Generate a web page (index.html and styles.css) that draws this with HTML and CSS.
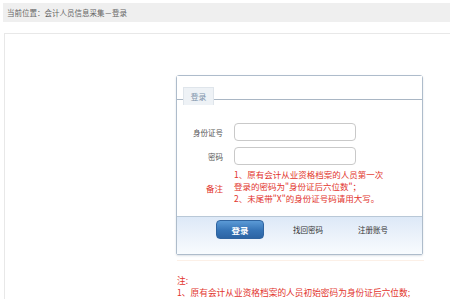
FILE: index.html
```html
<!DOCTYPE html>
<html lang="zh-CN">
<head>
  <meta charset="UTF-8" />
  <title>会计人员信息采集－登录</title>
  <link rel="stylesheet" href="styles.css">
</head>
<body>

<div class="crumb">当前位置：会计人员信息采集－登录</div>

<div class="content">
  <div class="panel">
    <div class="tabs">
      <span class="tab">登录</span>
    </div>
    <div class="form">
      <label class="label">身份证号</label>
      <input type="text" class="field" />
      <label class="label">密码</label>
      <input type="password" class="field" />
      <span class="label red">备注</span>
      <div class="tip">
        1、原有会计从业资格档案的人员第一次<br>
        登录的密码为"身份证后六位数"；<br>
        2、未尾带"X"的身份证号码请用大写。
      </div>
    </div>
    <div class="footer">
      <button class="btn">登录</button>
      <a class="link first">找回密码</a>
      <a class="link">注册账号</a>
    </div>
  </div>

  <div class="notes">
    <p>注:</p>
    <p>1、原有会计从业资格档案的人员初始密码为身份证后六位数;</p>
  </div>
</div>

</body>
</html>
```

FILE: styles.css
```css
* { margin: 0; padding: 0; box-sizing: border-box; font-family: "Noto Sans CJK SC", "Noto Sans", sans-serif; }
html, body { height: 100%; overflow: hidden; background: #fff; }

.crumb {
  margin: 3px 0 0 3px;
  height: 19px;
  line-height: 19px;
  padding-left: 4px;
  background: #efefef;
  color: #666;
  font-size: 7.5px;
}

.content {
  margin: 11px 0 0 4px;
  border: 1px solid #e8e8e8;
  border-right: none;
  border-bottom: none;
  height: 266px;
  overflow: hidden;
  padding: 41px 0 0 171px;
}

.panel {
  width: 247px;
  border: 1px solid #aebccb;
  border-radius: 3px 3px 2px 2px;
  box-shadow: 0 1px 2px rgba(120,140,160,0.25);
}

.tabs {
  height: 24px;
  padding: 5px 0 0 6px;
  border-bottom: 1px solid #a9b6c4;
  background: #fff;
}
.tab {
  display: inline-block;
  width: 31px;
  height: 18px;
  line-height: 17px;
  text-align: center;
  background: #eef2f6;
  border: 1px solid #dfe5eb;
  border-bottom: none;
  color: #7d93ab;
  font-size: 7.8px;
}

.form {
  display: grid;
  grid-template-columns: 46px 122px;
  column-gap: 11px;
  row-gap: 6px;
  align-items: center;
  padding: 23px 0 12px 0;
}
.label {
  text-align: right;
  color: #555;
  font-size: 7.5px;
}
.red { color: #e2342c; font-size: 8.5px; }
.field {
  height: 18px;
  border: 1px solid #c9c9c9;
  border-radius: 4px;
  background: #fff;
}
.tip {
  grid-column: 2 / 3;
  width: 170px;
  margin-top: -3px;
  color: #e2342c;
  font-size: 8.5px;
  line-height: 12px;
  white-space: nowrap;
}

.footer {
  display: flex;
  align-items: flex-start;
  height: 38px;
  padding: 3px 0 0 39px;
  border-top: 1px solid #b9c8d7;
  background: linear-gradient(#dde9f7, #eef4fb 60%, #f8fbfe);
}
.btn {
  width: 48px;
  height: 19px;
  border: 1px solid #2f64a0;
  border-radius: 4px;
  background: linear-gradient(#5b9ad6, #3674b6 55%, #2c64a4);
  color: #fff;
  font-size: 8.5px;
  font-weight: bold;
  cursor: pointer;
}
.link {
  margin-top: 3px;
  margin-left: 35px;
  line-height: 14px;
  color: #333;
  font-size: 7.5px;
  cursor: pointer;
}
.link.first { margin-left: 29px; }

.notes {
  width: 247px;
  margin: 5px 0 0 1px;
  padding-top: 14px;
  border-top: 1px solid #fcf0e7;
  color: #e2342c;
  font-size: 8.7px;
  line-height: 12px;
  white-space: nowrap;
}
```
